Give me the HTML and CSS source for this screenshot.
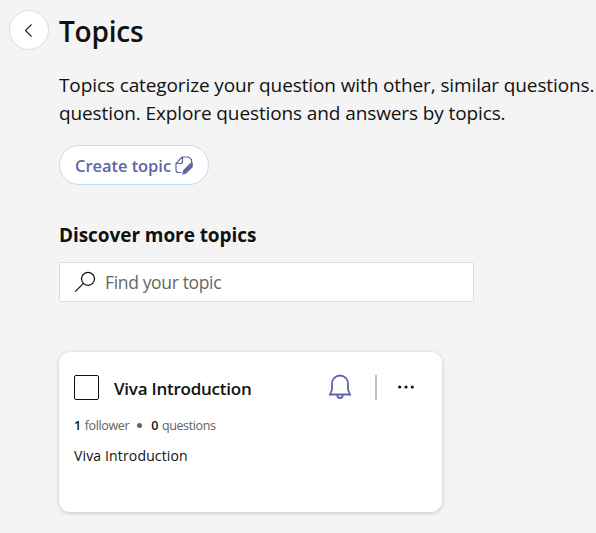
FILE: index.html
```html
<!DOCTYPE html>
<html lang="en">
<head>
<meta charset="utf-8">
<title>Topics</title>
<link rel="stylesheet" href="styles.css">
</head>
<body>
<header class="header">
  <button class="back" aria-label="Back"><svg width="20" height="20" viewBox="0 0 20 20"><path d="M12.500 4.500 6.500 10.500l6 6"/></svg></button>
  <h1>Topics</h1>
</header>
<main class="main">
  <p class="intro"><span class="line line-a">Topics categorize your question with other, similar questions.</span><span class="line line-b">question. Explore questions and answers by topics.</span></p>
  <button class="create"><span class="label">Create topic</span><svg width="20" height="20" viewBox="0 0 20 20"><path d="M7.500 17.500H4.500a2.500 2.500 0 0 1-2.500-2.500V8.500L8 2h6.500L17.500 4.500V8M8.500 2V6.500a2 2 0 0 1-2 2H2"/><path class="nib" d="M9 18.800l.7-3.300 6.500-6.500 2-.8v3.500l-6.200 6.300z"/></svg></button>
  <h2>Discover more topics</h2>
  <div class="search"><svg width="22" height="22" viewBox="0 0 22 22"><circle cx="14" cy="7.800" r="6.500"/><path d="M9.400 12.400 1.200 20.600"/></svg><span>Find your topic</span></div>
  <article class="card">
    <div class="top"><span class="box"></span><h3>Viva Introduction</h3>
      <svg class="bell" width="24" height="26" viewBox="0 0 24 26"><path d="M12 1.500a8 8 0 0 0-8 8v6L2 20.500h20l-2-5v-6a8 8 0 0 0-8-8zM9.200 21a2.800 3 0 0 0 5.600 0"/></svg>
      <span class="divider"></span>
      <svg class="more" width="16" height="4" viewBox="0 0 16 4"><circle cx="1.700" cy="2" r="1.600"/><circle cx="8" cy="2" r="1.600"/><circle cx="14.300" cy="2" r="1.600"/></svg></div>
    <p class="stats"><b>1</b><span>follower</span><i></i><b>0</b><span>questions</span></p>
    <p class="desc">Viva Introduction</p>
  </article>
</main>
</body>
</html>
```
FILE: styles.css
```css
* { box-sizing: border-box; }
body { margin: 0; height: 533px; overflow: hidden; background: #f4f4f4; color: #111; font-family: "Open Sans", "Noto Sans", sans-serif; }
h1, h2, h3, p { margin: 0; }
button { font-family: inherit; }
svg { fill: none; stroke: currentColor; flex: none; }
.header { display: flex; padding: 10px 0 0 9px; gap: 10px; height: 71px; }
.back { width: 40px; height: 40px; border-radius: 50%; border: 1px solid #dedede; background: #fff; color: #242424; padding: 0; display: grid; place-items: center; }
.back svg { stroke-width: 1.200; }
h1 { font-size: 28px; line-height: 42px; font-weight: 600; letter-spacing: -0.200px; }
.main { padding-left: 59px; }
.intro { font-size: 19px; line-height: 28px; white-space: nowrap; height: 74px; letter-spacing: -0.110px; }
.line { display: block; }
.create { display: flex; align-items: center; gap: 4px; width: 150px; height: 40px; padding: 0 0 0 15px; border: 1px solid #c0dcf3; border-radius: 20px; background: #fff; color: #6264a7; font-size: 16.500px; font-weight: 600; white-space: nowrap; }
.create svg { stroke-width: 1.200; margin-left: -2px; }
.label { width: 97px; text-align: left; letter-spacing: -0.050px; }
.nib { fill: currentColor; }
h2 { margin-top: 36px; height: 41px; font-size: 19px; line-height: 28px; font-weight: 700; letter-spacing: -0.070px; }
.search { display: flex; align-items: center; width: 415px; height: 40px; padding-left: 14px; gap: 9px; background: #fff; border: 1px solid #dedede; border-radius: 2px; font-size: 17.500px; letter-spacing: -0.350px; color: #666; }
.search svg { color: #111; stroke-width: 1.200; }
.card { margin-top: 50px; width: 383px; height: 160px; border-radius: 11px; background: #fff; box-shadow: 0 1px 4px rgba(0,0,0,.2); padding: 18px 15px; }
.top { display: flex; align-items: center; height: 34px; }
.box { width: 25px; height: 25px; border: 1px solid #111; border-radius: 2px; }
h3 { margin-left: 15px; width: 214px; font-size: 17px; line-height: 24px; padding-top: 4px; font-weight: 600; letter-spacing: -0.240px; }
.bell { color: #6264a7; stroke-width: 1.800; }
.divider { width: 2px; height: 25px; background: #c3c3c3; margin: 0 21px 0 23px; }
.more circle { fill: #111; stroke: none; }
.stats { display: flex; align-items: center; height: 18px; margin-top: 12px; font-size: 12.500px; letter-spacing: -0.380px; }
.stats b { margin-right: 4px; font-weight: 600; }
.stats span { color: #616161; }
.stats i { width: 5px; height: 5px; border-radius: 50%; background: #616161; margin: 0 9px 0 8px; }
.desc { margin-top: 11px; font-size: 14px; line-height: 22px; letter-spacing: 0.150px; }
```
